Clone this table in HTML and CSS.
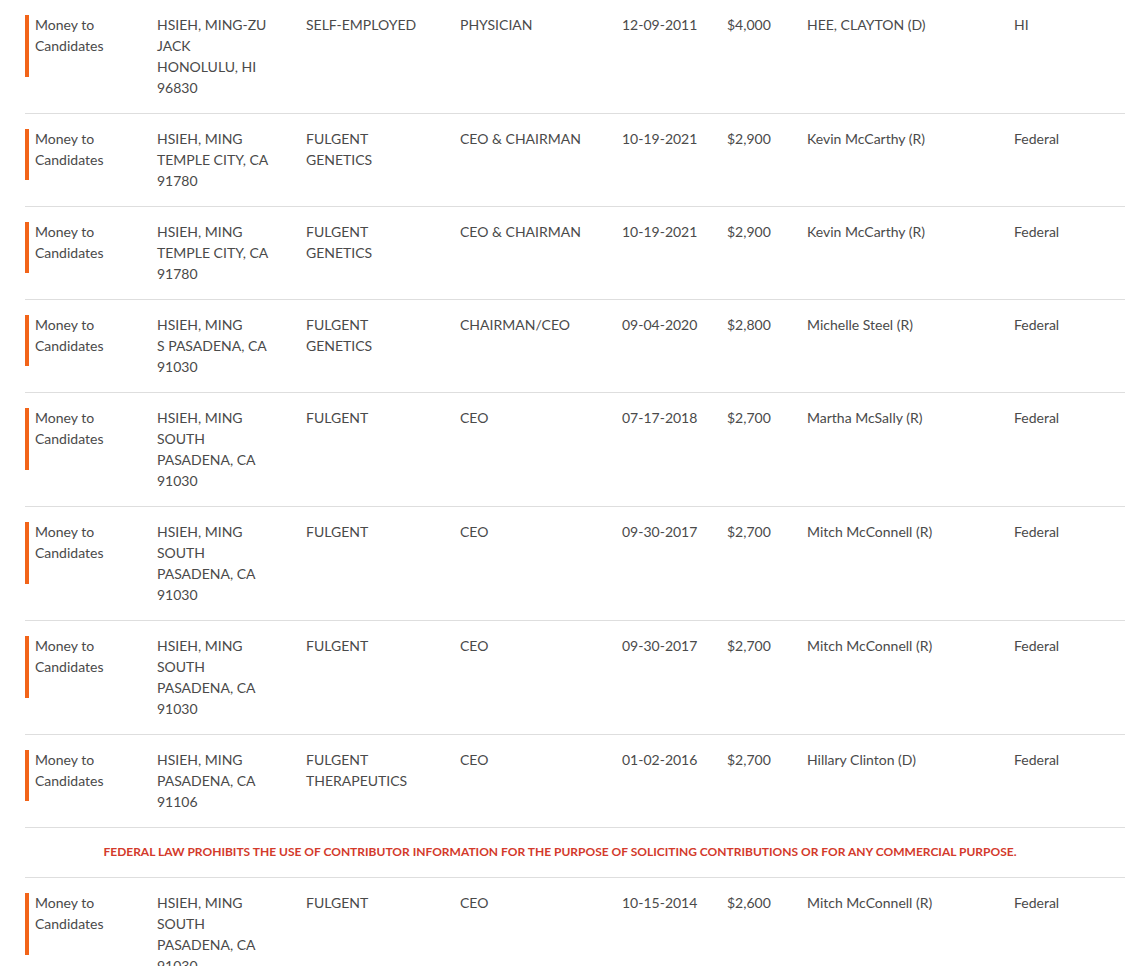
FILE: index.html
```html
<!DOCTYPE html>
<html>
<head>
<meta charset="utf-8">
<link rel="stylesheet" href="styles.css">
</head>
<body>
<div class="wrap">
<table class="contrib">
  <colgroup>
    <col class="c-type"><col class="c-name"><col class="c-emp"><col class="c-occ"><col class="c-date"><col class="c-amt"><col class="c-rec"><col class="c-jur">
  </colgroup>
  <tbody>
    <tr>
      <td class="type">Money to<br>Candidates</td>
      <td>HSIEH, MING-ZU<br>JACK<br>HONOLULU, HI<br>96830</td>
      <td>SELF-EMPLOYED</td>
      <td>PHYSICIAN</td>
      <td>12-09-2011</td>
      <td>$4,000</td>
      <td>HEE, CLAYTON (D)</td>
      <td>HI</td>
    </tr>
    <tr>
      <td class="type">Money to<br>Candidates</td>
      <td>HSIEH, MING<br>TEMPLE CITY, CA<br>91780</td>
      <td>FULGENT<br>GENETICS</td>
      <td>CEO &amp; CHAIRMAN</td>
      <td>10-19-2021</td>
      <td>$2,900</td>
      <td>Kevin McCarthy (R)</td>
      <td>Federal</td>
    </tr>
    <tr>
      <td class="type">Money to<br>Candidates</td>
      <td>HSIEH, MING<br>TEMPLE CITY, CA<br>91780</td>
      <td>FULGENT<br>GENETICS</td>
      <td>CEO &amp; CHAIRMAN</td>
      <td>10-19-2021</td>
      <td>$2,900</td>
      <td>Kevin McCarthy (R)</td>
      <td>Federal</td>
    </tr>
    <tr>
      <td class="type">Money to<br>Candidates</td>
      <td>HSIEH, MING<br>S PASADENA, CA<br>91030</td>
      <td>FULGENT<br>GENETICS</td>
      <td>CHAIRMAN/CEO</td>
      <td>09-04-2020</td>
      <td>$2,800</td>
      <td>Michelle Steel (R)</td>
      <td>Federal</td>
    </tr>
    <tr>
      <td class="type">Money to<br>Candidates</td>
      <td>HSIEH, MING<br>SOUTH<br>PASADENA, CA<br>91030</td>
      <td>FULGENT</td>
      <td>CEO</td>
      <td>07-17-2018</td>
      <td>$2,700</td>
      <td>Martha McSally (R)</td>
      <td>Federal</td>
    </tr>
    <tr>
      <td class="type">Money to<br>Candidates</td>
      <td>HSIEH, MING<br>SOUTH<br>PASADENA, CA<br>91030</td>
      <td>FULGENT</td>
      <td>CEO</td>
      <td>09-30-2017</td>
      <td>$2,700</td>
      <td>Mitch McConnell (R)</td>
      <td>Federal</td>
    </tr>
    <tr>
      <td class="type">Money to<br>Candidates</td>
      <td>HSIEH, MING<br>SOUTH<br>PASADENA, CA<br>91030</td>
      <td>FULGENT</td>
      <td>CEO</td>
      <td>09-30-2017</td>
      <td>$2,700</td>
      <td>Mitch McConnell (R)</td>
      <td>Federal</td>
    </tr>
    <tr>
      <td class="type">Money to<br>Candidates</td>
      <td>HSIEH, MING<br>PASADENA, CA<br>91106</td>
      <td>FULGENT<br>THERAPEUTICS</td>
      <td>CEO</td>
      <td>01-02-2016</td>
      <td>$2,700</td>
      <td>Hillary Clinton (D)</td>
      <td>Federal</td>
    </tr>
    <tr class="notice-row">
      <td colspan="8" class="notice">FEDERAL LAW PROHIBITS THE USE OF CONTRIBUTOR INFORMATION FOR THE PURPOSE OF SOLICITING CONTRIBUTIONS OR FOR ANY COMMERCIAL PURPOSE.</td>
    </tr>
    <tr>
      <td class="type">Money to<br>Candidates</td>
      <td>HSIEH, MING<br>SOUTH<br>PASADENA, CA<br>91030</td>
      <td>FULGENT</td>
      <td>CEO</td>
      <td>10-15-2014</td>
      <td>$2,600</td>
      <td>Mitch McConnell (R)</td>
      <td>Federal</td>
    </tr>
  </tbody>
</table>
</div>
</body>
</html>
```

FILE: styles.css
```css
html, body {
  margin: 0;
  padding: 0;
  background: #fff;
}
body {
  font-family: "Lato", "Liberation Sans", sans-serif;
  font-size: 14px;
  color: #4a4a4a;
}
.wrap {
  padding: 0 8px 0 25px;
}
.contrib {
  width: 1100px;
  border-collapse: collapse;
  table-layout: fixed;
}
.c-type { width: 122px; }
.c-name { width: 149px; }
.c-emp { width: 154px; }
.c-occ { width: 162px; }
.c-date { width: 105px; }
.c-amt { width: 80px; }
.c-rec { width: 207px; }
.c-jur { width: 121px; }
.contrib td {
  vertical-align: top;
  padding: 14px 10px 15px 10px;
  line-height: 21px;
  border-bottom: 1px solid #dedede;
  text-align: left;
}
.contrib td.type {
  position: relative;
}
.contrib td.type::before {
  content: "";
  position: absolute;
  left: 0;
  top: 15px;
  width: 4px;
  height: 55%;
  background: #f26419;
}
.contrib td.notice {
  text-align: center;
  color: #d33a2b;
  font-weight: 700;
  font-size: 12px;
  line-height: 16px;
  padding: 16px 40px 17px 10px;
}
```
